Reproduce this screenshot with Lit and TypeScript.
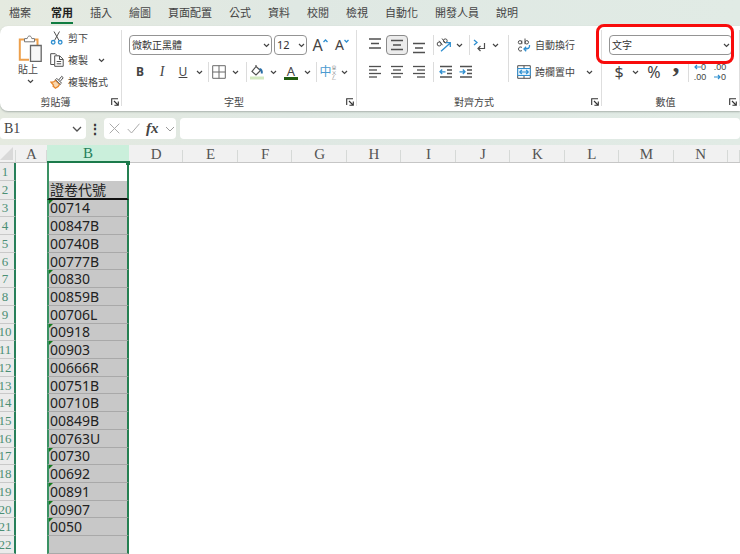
import { LitElement, html, css, svg, nothing, type TemplateResult } from "lit";
import { customElement } from "lit/decorators.js";
import { classMap } from "lit/directives/class-map.js";

const INK = "#505050";
const BLUE = "#2f8fd0";

const icon = (w: number, h: number, body: unknown) =>
  html`<svg width=${w} height=${h} viewBox="0 0 ${w} ${h}" fill="none" stroke=${INK} aria-hidden="true">${body}</svg>`;

const chevron = icon(7, 5, svg`<path d="M1 1l2.5 2.5L6 1" stroke-width="1.2" stroke="#444"/>`);
const launcher = icon(8, 8, svg`<path d="M.7 7V.7H7M3 3l4 4M7.3 3.4v3.9H3.4" stroke-width="1.1" stroke="#333"/>`);

const lines = (rows: Array<[number, number]>) =>
  icon(14, 14, svg`${rows.map(([x, w], i) => svg`<path d="M${x} ${1.5 + i * 3.5}h${w}" stroke-width="1.3"/>`)}`);

const threeLines = (top: number) =>
  icon(14, 20, svg`<path d="M1 ${top}h12M3 ${top + 4.5}h8M1 ${top + 9}h12" stroke-width="1.3"/>`);

const icons = {
  paste: icon(24, 27, svg`
    <path d="M6 4.500H1.800v20.200H11M17 4.500h2.500V10" stroke="#eda04c" stroke-width="2"/>
    <path d="M6.500 6.800V3.600h2.700C9.500 2 10.300 1 11.500 1s2 1 2.300 2.600h2.700v3.200z" stroke="#777" fill="#fff"/>
    <path d="M12.500 10.500h10.700v15.800H12.500z" fill="#f8f8f8" stroke="#666" stroke-width="1.300"/>`),
  cut: icon(14, 14, svg`
    <path d="M4 .500l5 9M9.500 .500l-5 9"/>
    <circle cx="3.200" cy="11.300" r="1.800" stroke=${BLUE} stroke-width="1.300"/>
    <circle cx="10.200" cy="11.300" r="1.800" stroke=${BLUE} stroke-width="1.300"/>`),
  copy: icon(14, 14, svg`
    <path d="M4 11.500H.700V.700h4.600l1.500 1.500"/>
    <path d="M4.700 2.800h5l3.500 3.500v7H4.700zM9.500 3v3.500h3.500M6.700 8.500h4.500M6.700 10.800h4.500"/>`),
  painter: icon(14, 14, svg`
    <path d="M1 7.200c2 .300 3.500-.400 4.500-1.800l4 4c-.800 2-2.200 3.200-4 3.800L3 11l.500-1z" fill="#f9d7ae" stroke="#e8872c" stroke-width="1.300"/>
    <path d="M5.500 4.700l1.300-1.300 4.700 4.700-1.300 1.300zM8.700 5l3-3.700 1.500 1.400-3 3.700" fill="#fff" stroke="#555"/>`),
  borders: icon(14, 14, svg`<path d="M.700.700h12.600v12.600H.700zM7 .700v12.600M.700 7h12.600" stroke="#6a6a6a"/>`),
  fill: icon(14, 15, svg`
    <path d="M6 1.500L2 6.500 6 10l4.500-4.500L6 1.500V0" stroke-width="1.200"/>
    <path d="M9.500 4c2 .300 2.500 2 2.300 4.500" stroke="#2a6fa8" stroke-width="2"/>
    <path d="M0 13h14" stroke="#d3e9c0" stroke-width="3"/>`),
  bar: icon(14, 3, svg`<path d="M0 1.500h14" stroke="#215c10" stroke-width="3"/>`),
  caretUp: icon(5, 4, svg`<path d="M.500 3l2-2 2 2" stroke=${BLUE} stroke-width="1.300"/>`),
  caretDown: icon(5, 4, svg`<path d="M.500 1l2 2 2-2" stroke=${BLUE} stroke-width="1.300"/>`),
  alignLeft: lines([[1, 12], [1, 8], [1, 12], [1, 8]]),
  alignCenter: lines([[1, 12], [3, 8], [1, 12], [3, 8]]),
  alignRight: lines([[1, 12], [5, 8], [1, 12], [5, 8]]),
  alignTop: threeLines(4),
  alignMiddle: threeLines(5.5),
  alignBottom: threeLines(8.5),
  orient: icon(16, 14, svg`
    <circle cx="3.200" cy="6" r="2"/><path d="M3.200 2.800l3.300 4.400M6 .500l3.700 4.800"/><circle cx="9.300" cy="2.800" r="1.900"/>
    <path d="M5 13.300l9-8M10 4.700h4.300V9" stroke=${BLUE} stroke-width="1.300"/>`),
  direction: icon(14, 13, svg`
    <path d="M1 1l3 2.500L1 6" stroke=${BLUE} stroke-width="1.300"/>
    <path d="M11.500 4v5.500H5M7.500 7L5 9.500 7.500 12" stroke-width="1.200"/>`),
  outdent: icon(14, 14, svg`
    <path d="M1 1.500h12M8 5h5M8 8.500h5M1 12h12" stroke-width="1.300"/>
    <path d="M6.500 6.800H1M3.200 4.500L1 6.800 3.200 9" stroke=${BLUE} stroke-width="1.300"/>`),
  indent: icon(14, 14, svg`
    <path d="M1 1.500h12M8 5h5M8 8.500h5M1 12h12" stroke-width="1.300"/>
    <path d="M.500 6.800H6M3.800 4.500L6 6.800 3.800 9" stroke=${BLUE} stroke-width="1.300"/>`),
  wrap: icon(14, 14, svg`
    <circle cx="3" cy="4.300" r="1.700"/><path d="M4.800 2.500v3.700M8 .500v5.700"/><circle cx="9.800" cy="4.300" r="1.700"/>
    <path d="M5 9.500C4 8.500 1.500 8.700 1.500 11s2.500 2.500 3.500 1.500"/>
    <path d="M12.500 7c.500 3-1 4-5.500 4M9.200 8.700L7 11l2.200 2.200" stroke=${BLUE} stroke-width="1.300"/>`),
  merge: icon(14, 14, svg`
    <path d="M.700.700h12.600v12.600H.700zM7 .700v2.500M7 11v2.300"/>
    <path d="M.700 3.500h12.600v7H.700z" stroke=${BLUE} fill="#e4f2fb"/>
    <path d="M2.800 7h8.400M4.800 5L2.800 7l2 2M9.200 5l2 2-2 2" stroke=${BLUE} stroke-width="1.200"/>`),
  arrowLeft: icon(7, 6, svg`<path d="M7 3H1M3 1L1 3l2 2" stroke=${BLUE} stroke-width="1.200"/>`),
  arrowRight: icon(7, 6, svg`<path d="M0 3h6M4 1l2 2-2 2" stroke=${BLUE} stroke-width="1.200"/>`),
  chevronBig: icon(10, 6, svg`<path d="M1 1l4 4 4-4" stroke-width="1.300"/>`),
  chevronPale: icon(10, 6, svg`<path d="M1 1l4 4 4-4" stroke="#999"/>`),
  cancel: icon(11, 11, svg`<path d="M.700.700l9.600 9.600M10.300.700L.700 10.300" stroke="#aaa"/>`),
  accept: icon(13, 11, svg`<path d="M.700 6l3.800 4L12.500.700" stroke="#aaa"/>`),
  corner: icon(17, 16, svg`<path d="M16 1v13H3z" fill="#d9d9d9" stroke="none"/>`),
};

const tabs = ["檔案", "常用", "插入", "繪圖", "頁面配置", "公式", "資料", "校閱", "檢視", "自動化", "開發人員", "說明"];
const columns = ["D", "E", "F", "G", "H", "I", "J", "K", "L", "M", "N"];
const cells = ["", "證卷代號", "00714", "00847B", "00740B", "00777B", "00830", "00859B", "00706L", "00918", "00903",
  "00666R", "00751B", "00710B", "00849B", "00763U", "00730", "00692", "00891", "00907", "0050", ""];

const tool = (size: string, name: string, body: unknown) =>
  html`<button class="tool ${size}" aria-label=${name}>${body}</button>`;
const more = (size: string, name: string) => tool(size, `${name} 選項`, chevron);
const rule = html`<span class="rule"></span>`;

const group = (name: string, cls: string, body: TemplateResult, extra: unknown = nothing) => html`
  <section class="group ${cls}" aria-label=${name}>
    <div class="body">${body}</div>
    <footer><span>${name}</span><button class="launch" aria-label="${name}設定">${launcher}</button></footer>
    ${extra}
  </section>`;

@customElement("app-root")
export class AppRoot extends LitElement {
  static styles = css`
    :host {
      display: flex; flex-direction: column; height: 100vh; overflow: hidden;
      background: linear-gradient(90deg, #e5eae0, #dfe8e3 40%, #e1ebe5);
      color: #444; font: 10px/14px "Noto Sans", "Noto Sans CJK TC", sans-serif;
    }
    * { box-sizing: border-box; }
    svg { display: block; flex: none; }
    button, input, select { margin: 0; padding: 0; border: 0; background: none; color: inherit; font: inherit; }
    button { display: flex; align-items: center; justify-content: center; white-space: nowrap; }

    .tabs { display: flex; gap: 17px; height: 26px; padding: 3px 9px 0; flex: none; }
    .tab { display: block; height: 21px; font-size: 11px; line-height: 19px; color: #444; text-decoration: none; white-space: nowrap; }
    .tab:first-child { margin-right: 3px; }
    .tab.on { font-weight: 700; color: #222; border-bottom: 2px solid #107c41; }

    .ribbon { display: flex; flex: none; height: 85px; background: #fff; border-radius: 8px 0 0 8px; box-shadow: 0 1px 2px #a9b1ac; }
    .group { position: relative; display: flex; flex-direction: column; justify-content: space-between; padding: 4px 0 2px; }
    .group::after { content: ""; position: absolute; right: 0; top: 4px; bottom: 5px; border-right: 1px solid #dedede; }
    .clipboard { flex: 122; }
    .font { flex: 235; }
    .alignment { flex: 245; }
    .number { flex: 138; }
    .body { display: flex; padding: 0 4px 0 7px; }
    .clipboard .body { padding-left: 18px; gap: 8px; }
    footer { display: grid; grid-template-columns: 1fr auto; align-items: center; text-align: center; padding-right: 3px; }
    .launch { width: 8px; height: 14px; }

    .paste { flex-direction: column; width: 24px; padding-top: 2px; }
    .paste span { margin-left: -4px; }
    .paste .drop { padding: 3px; }
    .stack { display: flex; flex-direction: column; gap: 8px; padding-top: 1px; }
    .line { display: flex; align-items: center; height: 14px; }
    .labelled { gap: 4px; }
    .line .labelled + .tool { margin-left: 6px; }

    .rows { display: flex; flex-direction: column; gap: 7px; padding-top: 5px; flex: 1; }
    .row { display: flex; align-items: center; height: 20px; }
    .tool { height: 20px; flex: none; }
    .s12 { width: 12px; } .s14 { width: 14px; } .s16 { width: 16px; } .s18 { width: 18px; }
    .s20 { width: 20px; } .s22 { width: 22px; } .s26 { width: 26px; }
    .rule { width: 6px; height: 20px; flex: none; background: linear-gradient(#dcdcdc, #dcdcdc) center / 1px 100% no-repeat; }
    .boxed { border: 1px solid #8a8a8a; border-radius: 4px; background: #ececec; }
    .bold { font-size: 12px; font-weight: 700; }
    .italic { font: italic 14px "Liberation Serif", serif; }
    .under { font-size: 12px; text-decoration: underline; }
    .big { font-size: 16px; align-items: flex-start; line-height: 20px; }
    .mid { font-size: 14px; align-items: flex-start; line-height: 20px; }
    .big svg, .mid svg { margin-top: 4px; }
    .colour { flex-direction: column; font-size: 13px; line-height: 12px; }
    .phon { color: #4b9bd0; font-size: 12px; }
    .phon small { font-size: 5px; line-height: 5px; width: 5px; white-space: normal; color: #777; }
    .money { font-size: 16px; }
    .comma { font: 700 28px/1px "Liberation Serif", serif; align-items: flex-start; }
    .decimals { flex-direction: column; font: 9px/10px "Liberation Sans", sans-serif; color: #444; }
    .decimals span { display: flex; align-items: center; }

    .pick { position: relative; display: flex; align-items: center; height: 20px; }
    .pick select { appearance: none; width: 100%; height: 20px; padding-left: 2px; border: 1px solid #949494; border-radius: 4px; color: #333; background: #fff; }
    .pick svg { position: absolute; right: 2px; top: 8px; pointer-events: none; }
    .face { flex: 1; margin-right: 2px; }
    .size { width: 33px; margin-right: 2px; }
    .size select { font-size: 11px; }
    .format { flex: 1; margin-right: 4px; }
    .side { flex: none; width: 90px; padding: 0 0 0 8px; margin-top: 5px; border-left: 1px solid #dcdcdc; }
    .side .labelled + .tool { margin-left: 8px; }
    .mark { position: absolute; left: -6px; right: 6px; top: -2px; height: 40px; border: 3px solid #f80c0c; border-radius: 8px; pointer-events: none; z-index: 1; }

    .formula { display: flex; flex: none; height: 21px; margin: 7px 0 6px; }
    .white { display: flex; align-items: center; background: #fff; border-radius: 4px; }
    .name { width: 86px; padding: 0 4px; justify-content: space-between; font: 14px "Liberation Serif", serif; }
    .name input { width: 40px; }
    .dots { width: 18px; font-size: 14px; font-weight: 700; color: #333; }
    .checks { width: 72px; padding: 0 1px 0 5px; margin-right: 4px; justify-content: space-between; }
    .fx { font: italic 700 15px "Liberation Serif", serif; }
    .entry { flex: 1; min-width: 0; }

    .sheet { display: flex; flex: 1; min-height: 0; background: #fff; margin-left: -3px; }
    table { flex: 1; width: 100%; border-collapse: separate; border-spacing: 0; table-layout: fixed; }
    th, td { padding: 0; font-weight: 400; overflow: visible; white-space: nowrap; }
    .c-row { width: 19px; } .c-a { width: 31px; } .c-b { width: 82px; } .c-end { width: 12px; }
    thead tr { height: 18px; }
    thead th { height: 18px; background: linear-gradient(#d6d9d7, #d6d9d7) right bottom / 1px 12px no-repeat #f1f1f1; border-bottom: 1px solid #c6c6c6; font: 15px/16px "Liberation Serif", serif; color: #555; }
    thead .pick-col { background: #caefdb; color: #26805a; border-bottom: 2px solid #1b7a4b; }
    tbody th { background: #ebebeb; color: #4b8f75; font: 13px/15px "Liberation Serif", serif; border-right: 2px solid #27805a; border-bottom: 1px solid #c9c9c9; padding-right: 1px; }
    .cell { position: relative; border-left: 2px solid #3a9163; border-right: 2px solid #258052; color: #222; font-size: 14px; line-height: 15px; }
    .cell div { display: flex; align-items: center; height: 100%; padding-left: 1px; }
    .filled { background: #c8c8c8; border-bottom: 1px solid #a9a9a9; }
    .heading { border-bottom: 2px solid #111; }
    .flagged::before { content: ""; position: absolute; left: 0; top: 0; border-top: 4px solid #137a1d; border-right: 4px solid transparent; }
    .handle::after { content: ""; position: absolute; right: -3px; top: -2px; width: 4px; height: 4px; background: #1b7a4b; }
  `;

  private ribbon() {
    return html`
      <div class="ribbon">
        ${group("剪貼簿", "clipboard", html`
          <button class="paste">${icons.paste}<span>貼上</span><i class="drop">${chevron}</i></button>
          <div class="stack">
            <div class="line"><button class="labelled">${icons.cut}剪下</button></div>
            <div class="line"><button class="labelled">${icons.copy}複製</button>${more("s14", "複製")}</div>
            <div class="line"><button class="labelled">${icons.painter}複製格式</button></div>
          </div>`)}
        ${group("字型", "font", html`
          <div class="rows">
            <div class="row">
              <label class="pick face"><select aria-label="字型"><option>微軟正黑體</option></select>${chevron}</label>
              <label class="pick size"><select aria-label="字型大小"><option>12</option></select>${chevron}</label>
              ${tool("s22 big", "放大字型", html`A${icons.caretUp}`)}
              ${tool("s22 mid", "縮小字型", html`A${icons.caretDown}`)}
            </div>
            <div class="row">
              ${tool("s22 bold", "粗體", "B")}${tool("s22 italic", "斜體", "I")}${tool("s20 under", "底線", "U")}${more("s12", "底線")}
              ${rule}${tool("s16", "框線", icons.borders)}${more("s16", "框線")}
              ${rule}${tool("s16", "填滿色彩", icons.fill)}${more("s16", "填滿色彩")}
              ${tool("s20 colour", "字型色彩", html`<span>A</span>${icons.bar}`)}${more("s12", "字型色彩")}
              ${rule}${tool("s18 phon", "注音", html`中<small>ㄓㄨㄥ</small>`)}${more("s14", "注音")}
            </div>
          </div>`)}
        ${group("對齊方式", "alignment", html`
          <div class="rows">
            <div class="row">
              ${tool("s22", "靠上對齊", icons.alignTop)}${tool("s22 boxed", "置中對齊", icons.alignMiddle)}${tool("s22", "靠下對齊", icons.alignBottom)}
              ${rule}${tool("s16", "方向", icons.orient)}${more("s14", "方向")}
              ${rule}${tool("s16", "文字方向", icons.direction)}${more("s14", "文字方向")}
            </div>
            <div class="row">
              ${tool("s22", "靠左", icons.alignLeft)}${tool("s22", "置中", icons.alignCenter)}${tool("s22", "靠右", icons.alignRight)}
              ${rule}${tool("s20", "減少縮排", icons.outdent)}${tool("s20", "增加縮排", icons.indent)}
            </div>
          </div>
          <div class="rows side">
            <div class="row"><button class="labelled">${icons.wrap}自動換行</button></div>
            <div class="row"><button class="labelled">${icons.merge}跨欄置中</button>${more("s12", "跨欄置中")}</div>
          </div>`)}
        ${group("數值", "number", html`
          <div class="rows">
            <div class="row">
              <label class="pick format"><select aria-label="數值格式"><option>文字</option></select>${chevron}</label>
            </div>
            <div class="row">
              ${tool("s20 money", "會計格式", "$")}${more("s12", "會計格式")}${tool("s26 money", "百分比", "%")}
              ${tool("s18 comma", "千分位", ",")}${rule}
              ${tool("s18 decimals", "增加小數位數", html`<span>${icons.arrowLeft}0</span><span>.00</span>`)}
              ${tool("s22 decimals", "減少小數位數", html`<span>.00</span><span>${icons.arrowRight}0</span>`)}
            </div>
          </div>`, html`<div class="mark"></div>`)}
      </div>`;
  }

  private sheet() {
    return html`
      <main class="sheet">
        <table>
          <colgroup>
            <col class="c-row"><col class="c-a"><col class="c-b">${columns.map(() => html`<col>`)}<col class="c-end">
          </colgroup>
          <thead>
            <tr><th aria-label="全選">${icons.corner}</th><th>A</th><th class="pick-col">B</th>${columns.map((c) => html`<th>${c}</th>`)}<th></th></tr>
          </thead>
          <tbody>
            ${cells.map((text, i) => html`
              <tr>
                <th>${i + 1}</th><td></td>
                <td class=${classMap({
                  cell: true, filled: i > 0, heading: i === 1, handle: i === 0,
                  flagged: i > 1 && /^\d+$/.test(text),
                })}><div>${text}</div></td>
                <td colspan="12"></td>
              </tr>`)}
          </tbody>
        </table>
      </main>`;
  }

  render() {
    return html`
      <nav class="tabs">
        ${tabs.map((t) => html`<a href="#" class=${classMap({ tab: true, on: t === "常用" })}>${t}</a>`)}
      </nav>
      ${this.ribbon()}
      <div class="formula">
        <label class="white name"><input aria-label="名稱方塊" value="B1">${icons.chevronBig}</label>
        <button class="dots" aria-label="調整大小">⋮</button>
        <div class="white checks">
          <button aria-label="取消">${icons.cancel}</button><button aria-label="輸入">${icons.accept}</button>
          <button class="fx" aria-label="插入函數">fx</button><button aria-label="更多">${icons.chevronPale}</button>
        </div>
        <input class="white entry" aria-label="資料編輯列">
      </div>
      ${this.sheet()}`;
  }
}
